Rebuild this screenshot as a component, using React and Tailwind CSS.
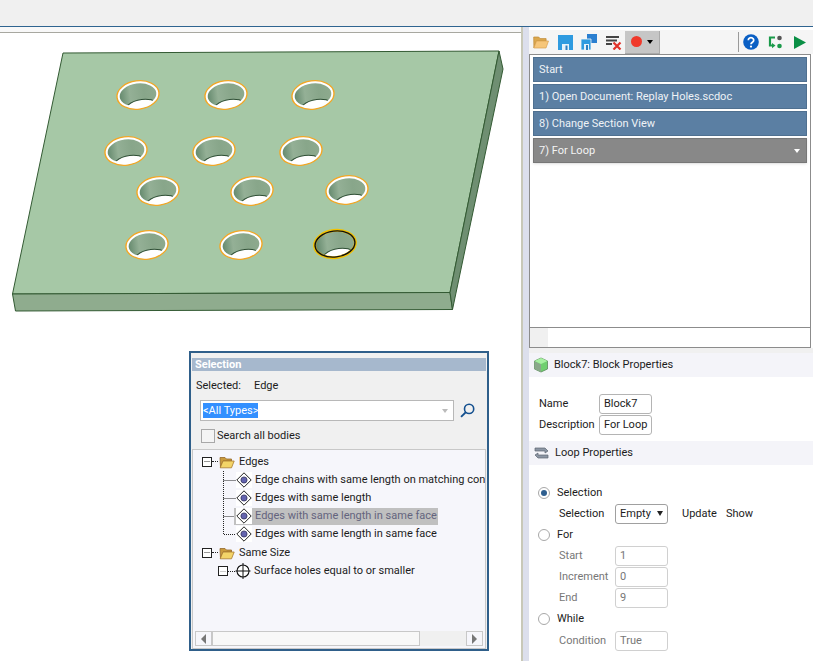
import React from 'react';

const HOLES = [
  [138, 95], [226, 95], [313, 95],
  [126, 151], [214, 151], [301, 151],
  [158, 191], [252, 191], [347, 190],
  [147, 245], [241, 245],
];

const STEPS = ['Start', '1) Open Document: Replay Holes.scdoc', '8) Change Section View'];

function Hole({ x, y, active, id }) {
  return (
    <g transform={`translate(${x} ${y - 27}) rotate(-7)`}>
      <clipPath id={id}>
        <ellipse rx="20" ry="13" />
      </clipPath>
      <ellipse rx="20" ry="13" fill="url(#holeWall)" />
      <g clipPath={`url(#${id})`}>
        <ellipse cx="3" cy="18" rx="20" ry="13" fill="#fff" stroke="#2f4f35" strokeWidth="1" />
      </g>
      {active ? (
        <>
          <ellipse rx="20.5" ry="13.5" fill="none" stroke="#f2c200" strokeWidth="3" />
          <ellipse rx="20" ry="13" fill="none" stroke="#111" strokeWidth="1.4" />
        </>
      ) : (
        <>
          <ellipse rx="21" ry="14" fill="none" stroke="#f5a623" strokeWidth="1.6" />
          <ellipse rx="19.4" ry="12.5" fill="none" stroke="#fff" strokeWidth="2" />
        </>
      )}
    </g>
  );
}

function Plate() {
  return (
    <svg width="521" height="294" className="block" aria-hidden="true">
      <defs>
        <linearGradient id="holeWall" x1="0" x2="1" y1="0" y2="0">
          <stop offset="0" stopColor="#5f8468" />
          <stop offset="0.3" stopColor="#94b096" />
          <stop offset="0.65" stopColor="#88a68a" />
          <stop offset="1" stopColor="#8eaa8e" />
        </linearGradient>
      </defs>
      <g transform="translate(0 -6)">
        <g stroke="#335a33" strokeWidth="1" strokeLinejoin="round">
          <polygon points="63,26 499,24 450,265.5 12.5,267" fill="#a6c8a6" />
          <polygon points="12.5,267 450,265.5 452.5,282.5 15.5,284" fill="#8fac8e" />
          <polygon points="499,24 503,42 452.5,282.5 450,265.5" fill="#6f8f72" />
        </g>
        {HOLES.map(([x, y], i) => (
          <Hole key={i} x={x} y={y} id={`hole${i}`} />
        ))}
        <Hole x={335} y={244} active id="holeActive" />
      </g>
    </svg>
  );
}

function Folder() {
  return (
    <svg width="16" height="14" viewBox="0 0 16 14" className="shrink-0" aria-hidden="true">
      <path d="M1 2.5h5l1.5 1.5h5V6H4L1.5 12.5z" fill="#c99a3c" stroke="#96682a" strokeWidth="0.8" />
      <path d="M4 6h11.2L12.5 12.8H1.2z" fill="#f3d468" stroke="#a87a30" strokeWidth="0.8" />
    </svg>
  );
}

function Expander({ muted }) {
  return (
    <span className="w-[10px] h-[10px] border border-[#222] bg-white flex items-center justify-center shrink-0">
      <span className={`w-[6px] h-px ${muted ? 'bg-[#ccc]' : 'bg-[#999]'}`} />
    </span>
  );
}

function Diamond() {
  return (
    <svg width="16" height="16" viewBox="0 0 16 16" className="shrink-0" aria-hidden="true">
      <rect width="16" height="16" fill="#fff" />
      <path d="M8 .8 15.2 8 8 15.2.8 8z" fill="#fff" stroke="#222" strokeWidth="1" />
      <circle cx="8" cy="8" r="3.1" fill="#6464ae" stroke="#2c2c50" strokeWidth="0.7" />
    </svg>
  );
}

function Crosshair() {
  return (
    <svg width="16" height="18" viewBox="0 0 16 18" className="shrink-0" aria-hidden="true">
      <circle cx="8" cy="9" r="6" fill="#fff" stroke="#111" strokeWidth="1.1" />
      <path d="M8 1v16M.5 9h15" stroke="#111" strokeWidth="1" />
    </svg>
  );
}

function Connector({ last }) {
  return (
    <svg width="13" height="18" className="shrink-0" aria-hidden="true">
      <path
        d={last ? 'M.5 0V9.5H13' : 'M.5 0V18M.5 9.5H13'}
        fill="none"
        stroke="#222"
        strokeDasharray="1 1"
      />
    </svg>
  );
}

function EdgeRow({ label, last, selected }) {
  return (
    <div className="flex items-center h-[18px] pl-[30px] whitespace-nowrap">
      <Connector last={last} />
      <div className={`flex items-center h-[17px] ${selected ? 'bg-[#c0c0c0] text-[#64647e] -ml-[2px] pl-[2px]' : ''}`}>
        <Diamond />
        <span className="ml-[3px] pr-px">{label}</span>
      </div>
    </div>
  );
}

function PanelHeader({ icon, children }) {
  return (
    <div className="h-[24px] bg-[#f4f4f9] flex items-center pl-[5px] gap-[6px]">
      {icon}
      <span>{children}</span>
    </div>
  );
}

function Field({ value, disabled }) {
  return (
    <span
      className={`w-[53px] h-[20px] px-[4px] flex items-center whitespace-nowrap border rounded-[3px] bg-white ${
        disabled ? 'border-[#d0d0d0] text-[#777]' : 'border-[#b4b4b4]'
      }`}
    >
      {value}
    </span>
  );
}

function Radio({ on, label, className = '' }) {
  return (
    <div className={`flex items-center h-[21px] pl-[9px] gap-[7px] ${className}`}>
      <span className="w-[12px] h-[12px] rounded-full border border-[#a8a8a8] bg-white flex items-center justify-center">
        {on && <span className="w-[6px] h-[6px] rounded-full bg-[#2f5f8f]" />}
      </span>
      <span>{label}</span>
    </div>
  );
}

function DisabledRow({ label, value }) {
  return (
    <div className="flex items-center h-[21px] pl-[30px]">
      <span className="w-[56px] text-[#777]">{label}</span>
      <Field value={value} disabled />
    </div>
  );
}

function Toolbar() {
  return (
    <div className="h-[27px] pt-[3px] flex items-center bg-[#f5f5f5] bg-clip-content shrink-0">
      <svg width="16" height="14" viewBox="0 0 16 14" className="ml-[4px]" aria-hidden="true">
        <path d="M.7 2h5l1.4 1.6h6V6H3.5L.9 12.8z" fill="#dba84e" stroke="#c08a36" strokeWidth="0.7" />
        <path d="M3.5 6h12L13 13H.9z" fill="#f6c67a" stroke="#d8a050" strokeWidth="0.7" />
      </svg>
      <svg width="15" height="15" viewBox="0 0 15 15" className="ml-[9px]" aria-hidden="true">
        <path d="M0 0h15v15H0z" fill="#2f9be0" />
        <path d="M4 9h7v6H4z" fill="#e6f2fa" />
        <path d="M7.5 10.500h2V15h-2z" fill="#2f7fc0" />
      </svg>
      <svg width="16" height="16" viewBox="0 0 16 16" className="ml-[8px]" aria-hidden="true">
        <path d="M6 0h10v9H6z" fill="#2b7fd0" />
        <path d="M0 5h10v11H0z" fill="#2f9be0" stroke="#f5f5f5" strokeWidth="0.8" />
        <path d="M3 10h5v6H3z" fill="#e6f2fa" />
        <path d="M5 11h2v5H5z" fill="#2f7fc0" />
      </svg>
      <svg width="16" height="15" viewBox="0 0 16 15" className="ml-[9px]" aria-hidden="true">
        <path d="M0 1h13v2H0zM0 4.500h11v2H0zM0 8h6v2H0z" fill="#444" />
        <path d="M7.500 7.500l7 7M14.500 7.500l-7 7" stroke="#e2332b" strokeWidth="2.200" />
      </svg>
      <div className="ml-[3px] w-[35px] h-[23px] bg-[#c6c6c6] border-r border-b border-[#aaa] flex items-center pl-[6px] gap-[5px]">
        <span className="w-[11px] h-[11px] rounded-full bg-[#f0392b]" />
        <span className="w-0 h-0 border-x-[3.500px] border-x-transparent border-t-[4px] border-t-black" />
      </div>
      <span className="ml-[78px] w-px h-[20px] bg-[#9a9a9a]" />
      <svg width="16" height="16" viewBox="0 0 16 16" className="ml-[4px]" aria-hidden="true">
        <circle cx="8" cy="8" r="7.800" fill="#0a5fc4" />
        <path d="M5.300 6.200a2.700 2.500 0 1 1 4.100 2.100c-.9.6-1.400 1-1.400 2" fill="none" stroke="#fff" strokeWidth="1.800" />
        <circle cx="8" cy="12.600" r="1.100" fill="#fff" />
      </svg>
      <svg width="15" height="14" viewBox="0 0 15 14" className="ml-[9px]" aria-hidden="true">
        <path d="M7 2.500H2v8h3" fill="none" stroke="#1a9a4a" strokeWidth="2.200" />
        <path d="M4 8l3.500 2.600L4 13.200z" fill="#1a9a4a" />
        <circle cx="11.500" cy="3" r="2.300" fill="#555" />
        <circle cx="11.500" cy="11" r="2.300" fill="#1a9a4a" />
      </svg>
      <svg width="12" height="13" viewBox="0 0 12 13" className="ml-[11px]" aria-hidden="true">
        <path d="M0 0l12 6.500L0 13z" fill="#0a8f45" />
      </svg>
    </div>
  );
}

function SelectionDialog() {
  return (
    <div className="absolute left-[189px] top-[324px] w-[300px] h-[300px] border-2 border-[#2f5f8a] bg-[#f0f0f0] flex flex-col px-px">
      <div className="mt-[5px] h-[13px] bg-[#a6b8cd] text-white font-bold leading-[13px] pl-[3px]">Selection</div>
      <div className="flex mt-[7px] h-[16px] items-center pl-[4px]">
        <span className="w-[58px]">Selected:</span>
        <span>Edge</span>
      </div>
      <div className="flex items-center mt-[6px] pl-[8px]">
        <div className="w-[254px] h-[21px] border border-[#b8b8b8] bg-white flex items-center pl-[2px] relative">
          <span className="bg-[#3390ff] text-white leading-[15px]">&lt;All Types&gt;</span>
          <span className="absolute right-[5px] top-[8px] w-0 h-0 border-x-[3px] border-x-transparent border-t-[4px] border-t-[#bbb]" />
        </div>
        <svg width="15" height="15" viewBox="0 0 14 14" className="ml-[6px]" aria-hidden="true">
          <circle cx="8.500" cy="5.500" r="4.300" fill="none" stroke="#14508f" strokeWidth="1.500" />
          <path d="M5.500 8.500 1 13" stroke="#14508f" strokeWidth="1.800" />
        </svg>
      </div>
      <div className="flex items-center mt-[8px] pl-[9px] h-[14px]">
        <span className="w-[14px] h-[14px] border border-[#a8a8a8] bg-[#f4f4f4] mr-[2px]" />
        <span>Search all bodies</span>
      </div>
      <div className="mt-[6px] flex-1 bg-[#f6f6fb] border border-[#c8c8c8] overflow-hidden flex flex-col relative">
        <div className="pt-[2px] flex-1">
          <div className="flex items-center h-[19px] pl-[9px] whitespace-nowrap">
            <Expander />
            <span className="w-[6px] border-t border-dotted border-[#222]" />
            <span className="ml-px"><Folder /></span>
            <span className="ml-[4px]">Edges</span>
          </div>
          <EdgeRow label="Edge chains with same length on matching connected faces" />
          <EdgeRow label="Edges with same length" />
          <EdgeRow label="Edges with same length in same face" selected />
          <EdgeRow label="Edges with same length in same face" last />
          <div className="flex items-center h-[19px] pl-[9px] whitespace-nowrap">
            <Expander />
            <span className="w-[6px] border-t border-dotted border-[#222]" />
            <span className="ml-px"><Folder /></span>
            <span className="ml-[4px]">Same Size</span>
          </div>
          <div className="flex items-center h-[18px] pl-[25px] whitespace-nowrap">
            <Expander muted />
            <span className="w-[7px] border-t border-dotted border-[#222]" />
            <Crosshair />
            <span className="ml-[3px]">Surface holes equal to or smaller</span>
          </div>
        </div>
        <div className="h-[15px] mb-[2px] mx-[2px] flex items-stretch shrink-0">
          <span className="w-[17px] border border-[#c8c8c8] flex items-center justify-center">
            <span className="w-0 h-0 border-y-[5px] border-y-transparent border-r-[5px] border-r-[#777]" />
          </span>
          <span className="w-[210px] border border-[#c8c8c8] bg-[#f8f8f8]" />
          <span className="w-[46px] bg-[#f0f0f0]" />
          <span className="w-[17px] border border-[#c8c8c8] flex items-center justify-center">
            <span className="w-0 h-0 border-y-[5px] border-y-transparent border-l-[5px] border-l-[#777]" />
          </span>
        </div>
      </div>
    </div>
  );
}

export default function App() {
  return (
    <div className="w-[813px] h-[661px] overflow-hidden bg-white text-[11px] leading-[18px] text-[#1c1c1c] font-['Roboto',sans-serif] flex flex-col">
      <div className="h-[26px] bg-[#f0f0f0] shrink-0" />
      <div className="h-px bg-[#2f6490] shrink-0" />
      <div className="flex flex-1 min-h-0">
        {/* viewport */}
        <div className="w-[523px] shrink-0 relative border-r-2 border-[#c8c8b8]">
          <div className="h-[6px] bg-[#f8f8f8] border-b border-[#a8a8a0]" />
          <Plate />
          <SelectionDialog />
        </div>

        {/* replay panel */}
        <div className="w-[6px] bg-[#dcdfec] shrink-0" />
        <div className="flex-1 flex flex-col min-w-0">
          <Toolbar />
          <div className="h-[274px] mr-[2px] border border-[#8c8c8c] bg-white px-[3px] pt-[2px] flex flex-col gap-[2px] shrink-0">
            {STEPS.map((step) => (
              <div key={step} className="h-[25px] bg-[#5b7fa3] border border-[#4f7090] text-[#eef2f6] flex items-center pl-[5px]">
                {step}
              </div>
            ))}
            <div className="h-[25px] bg-[#888888] border border-[#777] text-[#f4f4f4] flex items-center justify-between pl-[5px] pr-[6px] shadow-sm">
              <span>7) For Loop</span>
              <span className="w-0 h-0 border-x-[3.500px] border-x-transparent border-t-[4px] border-t-white" />
            </div>
          </div>
          <div className="h-[20px] mr-[2px] border border-t-0 border-[#8c8c8c] bg-white shrink-0">
            <div className="w-[18px] h-full bg-[#f0f0f0]" />
          </div>
          <div className="h-[5px] bg-[#f0f0f0] shrink-0" />
          <PanelHeader
            icon={
              <svg width="14" height="16" viewBox="0 0 14 16" aria-hidden="true">
                <path d="M7 1l6.500 3v8L7 15 .5 12V4z" fill="#6fcf6f" stroke="#5c8a5c" strokeWidth="0.800" />
                <path d="M7 7.500V15L.5 12V4z" fill="#8aa88a" />
                <path d="M7 1l6.500 3L7 7 .5 4z" fill="#a6f0a0" />
              </svg>
            }
          >
            Block7: Block Properties
          </PanelHeader>
          <div className="pt-[17px] pb-[6px] pl-[10px] flex flex-col gap-px">
            <div className="flex items-center h-[20px]">
              <span className="w-[60px]">Name</span>
              <Field value="Block7" />
            </div>
            <div className="flex items-center h-[20px]">
              <span className="w-[60px]">Description</span>
              <Field value="For Loop" />
            </div>
          </div>
          <PanelHeader
            icon={
              <svg width="15" height="14" viewBox="0 0 15 14" aria-hidden="true">
                <path d="M1 5V2h10l3 3-3 2V5H4z" fill="#8c96a4" stroke="#5c6470" strokeWidth="0.700" />
                <path d="M14 9v3H4L1 9l3-2v2h7z" fill="#8c96a4" stroke="#5c6470" strokeWidth="0.700" />
              </svg>
            }
          >
            Loop Properties
          </PanelHeader>
          <div className="pt-[17px]">
            <Radio on label="Selection" />
            <div className="flex items-center h-[21px] pl-[30px]">
              <span className="w-[56px]">Selection</span>
              <span className="w-[53px] h-[20px] px-[4px] flex items-center justify-between border border-[#a0a0a0] rounded-[3px] bg-white">
                Empty
                <span className="w-0 h-0 border-x-[3.500px] border-x-transparent border-t-[5px] border-t-[#222]" />
              </span>
              <span className="ml-[14px]">Update</span>
              <span className="ml-[9px]">Show</span>
            </div>
            <Radio label="For" />
            <DisabledRow label="Start" value="1" />
            <DisabledRow label="Increment" value="0" />
            <DisabledRow label="End" value="9" />
            <Radio label="While" className="mb-px" />
            <DisabledRow label="Condition" value="True" />
          </div>
        </div>
      </div>
    </div>
  );
}
